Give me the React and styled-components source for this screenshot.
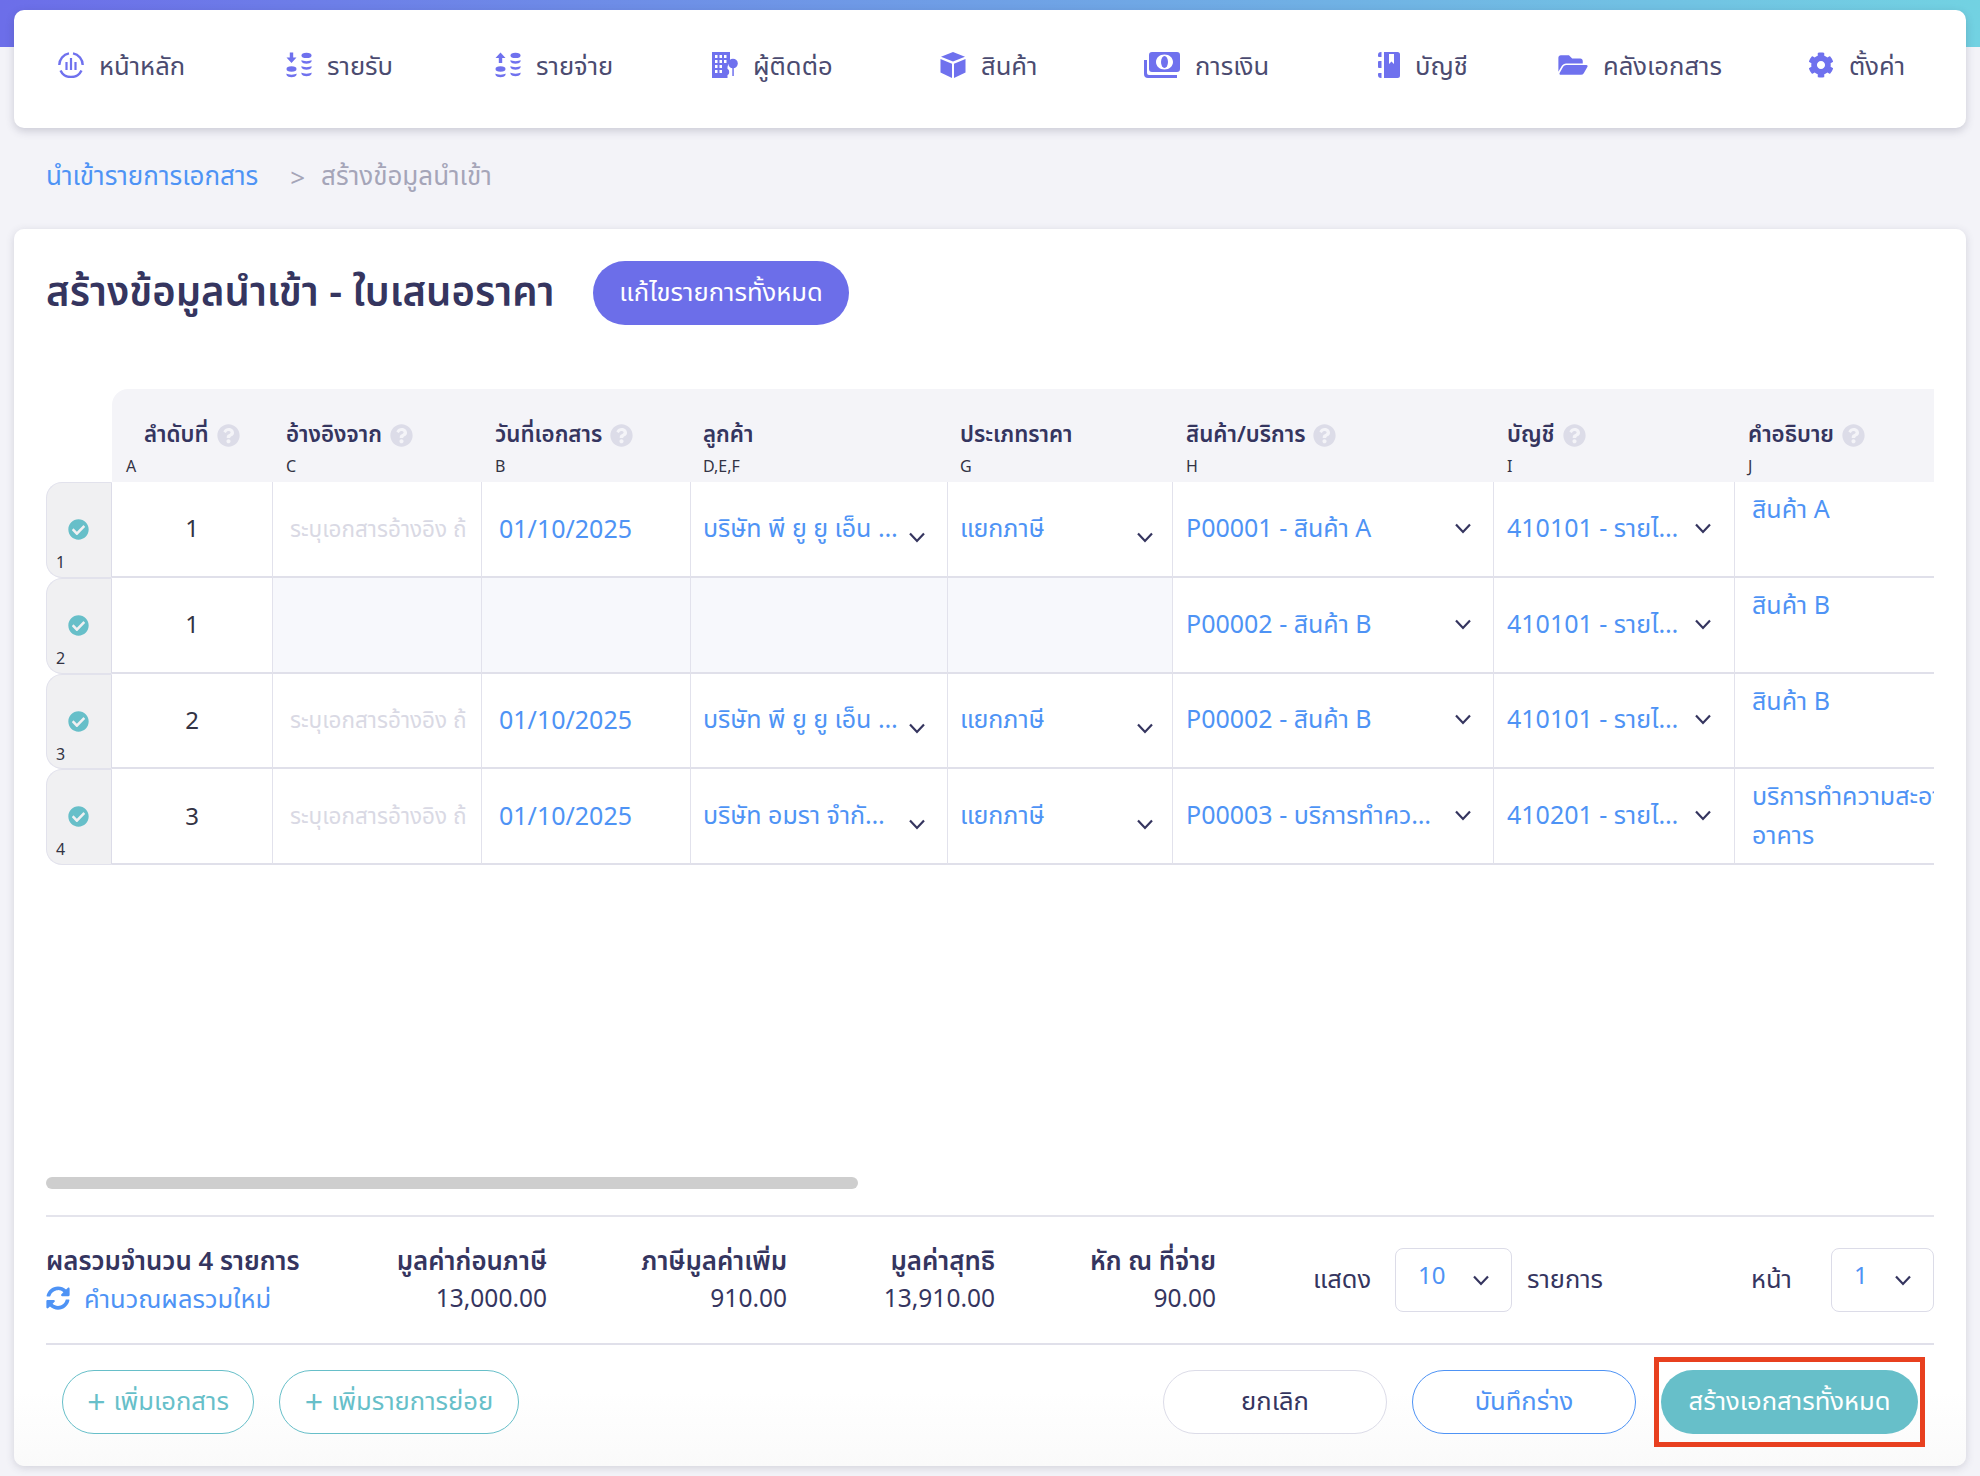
import React from "react";
import styled, { createGlobalStyle } from "styled-components";
import { FaFolderOpen, FaCog, FaSyncAlt, FaCheckCircle, FaQuestionCircle } from "react-icons/fa";

const Global = createGlobalStyle`
  html, body { margin: 0; padding: 0; }
  body {
    background: #f3f3f8 linear-gradient(90deg, #6c6ee9 0%, #72d2e2 100%) top left / 100% 47px no-repeat;
    font-family: "Noto Sans", "Noto Sans Thai", "Open Sans", sans-serif;
    color: #35355f;
  }
  * { box-sizing: border-box; }
`;

const Page = styled.div`
  width: 1980px;
  height: 1476px;
  padding: 10px 14px;
  overflow: hidden;
`;
const Nav = styled.nav`
  height: 118px;
  background: #fff;
  border-radius: 10px;
  box-shadow: 0 3px 8px rgba(60, 60, 90, 0.22);
  padding-left: 44px;
  display: grid;
  grid-template-columns: 228px 209px 217px 228px 204px 234px 180px 250px auto;
  align-items: center;
`;
const NavItem = styled.div`
  display: flex;
  align-items: center;
  gap: 15px;
  font-size: 25.6px;
  color: #4b4b70;
  height: 34px;
  margin-top: -8px;
  white-space: nowrap;
`;
const NavText = styled.span`
  margin-top: 5px;
`;
const IconBox = styled.span`
  display: inline-flex;
  width: ${(p) => p.$w || 26}px;
  height: 26px;
  color: #6f71ee;
  flex: none;
  svg { width: 100%; height: 100%; display: block; }
`;
const Crumbs = styled.div`
  height: 101px;
  padding: 0 0 4px 32px;
  display: flex;
  align-items: center;
  font-size: 26px;
  white-space: nowrap;
`;
const CrumbLink = styled.span` color: #4e93f5; `;
const CrumbSep = styled.span` color: #a5a5b8; margin: 0 16px 0 32px; `;
const CrumbNow = styled.span` color: #a5a5b8; `;
const Card = styled.section`
  height: 1237px;
  background: linear-gradient(180deg, #fff 94%, #fafafa 100%);
  border-radius: 10px;
  box-shadow: 0 2px 8px rgba(60, 60, 90, 0.18);
  padding: 32px 32px 0;
  display: flex;
  flex-direction: column;
`;
const TitleRow = styled.div`
  display: flex;
  align-items: center;
  height: 64px;
  margin-bottom: 64px;
`;
const Title = styled.h1`
  margin: 0;
  width: 547px;
  font-size: 40px;
  font-weight: 600;
  color: #35355f;
  white-space: nowrap;
`;
const Pill = styled.button`
  font-family: inherit;
  height: 64px;
  border-radius: 32px;
  cursor: pointer;
  font-size: 25.6px;
  white-space: nowrap;
  padding: 0;
  display: inline-flex;
  align-items: center;
  justify-content: center;
  flex: none;
  width: ${(p) => p.$w}px;
  ${(p) =>
    p.$kind === "primary" && "background:#6c6ee9;color:#fff;border:none;"}
  ${(p) =>
    p.$kind === "teal" && "background:#67bfc9;color:#fff;border:none;"}
  ${(p) =>
    p.$kind === "tealLine" && "background:#fff;color:#67bfc9;border:1px solid #67bfc9;"}
  ${(p) =>
    p.$kind === "blueLine" && "background:#fff;color:#4e93f5;border:1px solid #4e93f5;"}
  ${(p) =>
    p.$kind === "plain" && "background:#fff;color:#35355f;border:1px solid #dcdce8;"}
`;
const Plus = styled.span`
  font-size: 32px;
  line-height: 1;
  margin-right: 8px;
`;
const TableArea = styled.div`
  height: 788px;
  overflow: hidden;
`;
const cols = "66px 161px 209px 209px 257px 225px 321px 241px 320px";
const HeadRow = styled.div`
  display: grid;
  grid-template-columns: ${cols};
  height: 93px;
  width: 2008px;
`;
const HeadCell = styled.div`
  background: #f4f4f8;
  padding: 28px 0 0 ${(p) => p.$pad ?? 12}px;
  ${(p) => p.$first && "border-top-left-radius: 16px;"}
`;
const HeadLabel = styled.div`
  display: flex;
  align-items: center;
  gap: 8px;
  height: 36px;
  font-size: 22.3px;
  font-weight: 600;
  color: #35355f;
  white-space: nowrap;
  ${(p) => p.$shift && `margin-left: ${p.$shift}px;`}
`;
const HeadLetter = styled.div`
  font-size: 16px;
  line-height: 22px;
  margin-top: 2px;
  color: #333344;
`;
const Help = styled(FaQuestionCircle)`
  width: 23px;
  height: 23px;
  color: #dcdce8;
  flex: none;
`;
const Row = styled.div`
  display: grid;
  grid-template-columns: ${cols};
  height: 95.75px;
  width: 2008px;
`;
const Gutter = styled.div`
  background: #f0f0f2;
  border: 1px solid #e2e2ec;
  border-right: 1px solid #dcdce8;
  border-radius: 16px 0 0 16px;
  padding: 36px 0 0 9px;
  display: flex;
  flex-direction: column;
  font-size: 16px;
  line-height: 20px;
  color: #333344;
`;
const Check = styled(FaCheckCircle)`
  width: 21px;
  height: 21px;
  color: #67bfc9;
  margin-left: 12px;
  margin-bottom: 12px;
`;
const Cell = styled.div`
  border-right: 1px solid #e2e2ec;
  border-bottom: 2px solid #e0e0ea;
  background: ${(p) => (p.$muted ? "#f7f8fc" : "#fff")};
  min-width: 0;
  overflow: hidden;
  display: flex;
  align-items: center;
  font-size: 25px;
  white-space: nowrap;
  padding-left: ${(p) => p.$pad ?? 0}px;
`;
const NumCell = styled(Cell)`
  justify-content: center;
  font-size: 24px;
  color: #333344;
  padding-bottom: 2px;
`;
const Placeholder = styled.span`
  color: #d9d9e4;
  font-size: 22.5px;
  display: block;
  width: 176px;
  margin-top: 2px;
  overflow: hidden;
  white-space: nowrap;
`;
const Blue = styled.span`
  color: #4e93f5;
  display: block;
  overflow: hidden;
  text-overflow: ellipsis;
  white-space: nowrap;
  width: ${(p) => (p.$w ? p.$w + "px" : "auto")};
  flex: none;
`;
const DateText = styled(Blue)`
  margin-bottom: 2px;
`;
const Chevron = styled.svg`
  width: 18px;
  height: 12px;
  color: #35355f;
  flex: none;
  margin-left: ${(p) => p.$ml || 0}px;
  margin-top: ${(p) => p.$mt || 0}px;
`;
const DescCell = styled(Cell)`
  flex-direction: column;
  align-items: flex-start;
  justify-content: flex-start;
  padding: 7px 0 0 17px;
  line-height: 39px;
`;
const Chev = (p) => (
  <Chevron viewBox="0 0 18 12" fill="none" stroke="currentColor" strokeWidth="2.2" {...p}>
    <path d="M2 2.5 L9 10 L16 2.5" />
  </Chevron>
);
const Scroll = styled.div`
  width: 812px;
  height: 12px;
  background: #cecece;
  border-radius: 6px;
  flex: none;
`;
const Summary = styled.div`
  margin-top: 26px;
  height: 130px;
  border-top: 2px solid #e4e4ec;
  border-bottom: 2px solid #e0e0ea;
  display: flex;
  align-items: center;
`;
const SumCols = styled.div`
  display: grid;
  grid-template-columns: 250px 251px 240px 208px 221px;
  flex: none;
  margin-top: -3px;
`;
const SumLabel = styled.div`
  font-size: 25.8px;
  font-weight: 600;
  line-height: 38px;
  white-space: nowrap;
  text-align: ${(p) => (p.$left ? "left" : "right")};
`;
const SumValue = styled.div`
  font-size: 24.5px;
  line-height: 38px;
  text-align: right;
  white-space: nowrap;
`;
const Recalc = styled.div`
  display: flex;
  align-items: center;
  gap: 14px;
  font-size: 25.5px;
  line-height: 38px;
  color: #4e93f5;
  white-space: nowrap;
  svg { width: 24px; height: 24px; }
`;
const PageLabel = styled.div`
  font-size: 25.5px;
  flex: none;
  white-space: nowrap;
  width: ${(p) => p.$w}px;
  margin-left: ${(p) => p.$ml || 0}px;
`;
const PageSelect = styled.div`
  width: ${(p) => p.$w}px;
  height: 64px;
  border: 1px solid #dcdce8;
  border-radius: 8px;
  background: #fff;
  color: #4e93f5;
  font-size: 24px;
  flex: none;
  display: flex;
  align-items: flex-start;
  justify-content: space-between;
  padding: 9px 21px 0 ${(p) => p.$pad}px;
  svg { margin-top: 16px; }
`;
const Footer = styled.div`
  display: flex;
  gap: 25px;
  padding: 25px 16px 0;
`;
const Spacer = styled.div` flex: 1; `;
const Marked = styled.div`
  position: relative;
  display: flex;
`;
const Highlight = styled.div`
  position: absolute;
  left: -7px;
  right: -7px;
  top: -13px;
  bottom: -13px;
  border: 5px solid #e8401f;
  pointer-events: none;
`;

const Dash = () => (
  <svg viewBox="0 0 26 26" fill="none" stroke="currentColor" strokeWidth="2.4">
    <path d="M11 1.4A11.7 11.7 0 0 0 1.300 13" />
    <path d="M15 1.4A11.7 11.7 0 0 1 24.700 13" />
    <path d="M2.500 18.500A11.700 11.700 0 0 0 23.500 18.500" />
    <path d="M8.500 10v8M13 6v12M17.500 10v8" strokeWidth="2.200" />
  </svg>
);
const Coins = ({ up }) => (
  <svg viewBox="0 0 26 26" fill="currentColor">
    {up ? (
      <path d="M5.5 0.5 L10.5 6 H7.2 V11 H3.8 V6 H0.5 Z" />
    ) : (
      <path d="M3.8 0.5 H7.2 V5.5 H10.5 L5.5 11 L0.5 5.5 H3.8 Z" />
    )}
    <ellipse cx="5.5" cy="17" rx="5" ry="2.7" />
    <path d="M.5 21.5c1.5 1.5 8.5 1.5 10 0v1.4c-1.5 3-8.5 3-10 0z" />
    <ellipse cx="20.5" cy="3.4" rx="5" ry="2.7" />
    <path d="M15.5 8c1.5 1.5 8.5 1.5 10 0v1.4c-1.5 3-8.5 3-10 0z" />
    <path d="M15.5 14c1.5 1.5 8.5 1.5 10 0v1.4c-1.5 3-8.5 3-10 0z" />
    <path d="M15.5 20.5c1.5 1.5 8.5 1.5 10 0v1.4c-1.5 3-8.5 3-10 0z" />
  </svg>
);
const Building = () => (
  <svg viewBox="0 0 26 26" fill="currentColor">
    <path fillRule="evenodd" d="M0 0H18V10.5A5.5 5.5 0 0 0 15.5 15V26H0ZM3 3V6H5.500V3ZM7.500 3V6H10V3ZM12 3V6H14.500V3ZM3 8V11H5.500V8ZM7.500 8V11H10V8ZM12 8V11H14.500V8ZM3 13V16H5.500V13ZM7.500 13V16H10V13ZM3 18V21H5.500V18ZM7.500 18V21H10V18Z" />
    <circle cx="21" cy="11.500" r="4.800" />
    <rect x="20.300" y="15" width="1.500" height="9" />
    <circle cx="14" cy="20" r="3.200" />
    <rect x="13.200" y="22" width="1.600" height="4" />
  </svg>
);
const Cube = () => (
  <svg viewBox="0 0 26 26" fill="currentColor">
    <path d="M13 0 L25 4.8 L13 9.6 L1 4.8 Z" />
    <path d="M0.5 7 L12 11.7 V26 L0.5 20.6 Z" />
    <path d="M25.5 7 L14 11.7 V26 L25.5 20.6 Z" />
  </svg>
);
const Money = () => (
  <svg viewBox="0 0 36 26" fill="currentColor">
    <path fillRule="evenodd" d="M8 0H33a3 3 0 0 1 3 3V17a3 3 0 0 1-3 3H8a3 3 0 0 1-3-3V3a3 3 0 0 1 3-3ZM20.500 2.500C15.500 2.500 12 6 12 10s3.500 7.500 8.500 7.500 8.500-3.500 8.500-7.500-3.500-7.500-8.500-7.500Z" />
    <ellipse cx="20.500" cy="10" rx="3.500" ry="6" />
    <path d="M0 8H3V21a2 2 0 0 0 2 2H33V26H4a4 4 0 0 1-4-4Z" />
  </svg>
);
const Book = () => (
  <svg viewBox="0 0 22 26" fill="currentColor">
    <path fillRule="evenodd" d="M6 0H19.500A2.500 2.500 0 0 1 22 2.500V23.500A2.500 2.500 0 0 1 19.500 26H6ZM11 2V12L13.500 9.500L16 12V2Z" />
    <path d="M3.500 0V5H1a1 1 0 0 1-1-1V3A3 3 0 0 1 3 0ZM3.500 9V16H1a1 1 0 0 1-1-1V10a1 1 0 0 1 1-1ZM3.500 21V26H3a3 3 0 0 1-3-3V22a1 1 0 0 1 1-1Z" />
  </svg>
);

const navItems = [
  [<Dash />, "หน้าหลัก", 26],
  [<Coins />, "รายรับ", 26],
  [<Coins up />, "รายจ่าย", 26],
  [<Building />, "ผู้ติดต่อ", 26],
  [<Cube />, "สินค้า", 26],
  [<Money />, "การเงิน", 36],
  [<Book />, "บัญชี", 22],
  [<FaFolderOpen />, "คลังเอกสาร", 30],
  [<FaCog />, "ตั้งค่า", 26],
];

const rows = [
  { n: 1, idx: 1, cust: "บริษัท พี ยู ยู เอ็น จำกัด", prod: "P00001 - สินค้า A", acc: "410101 - รายได้จากการขาย", desc: ["สินค้า A"] },
  { n: 1, idx: 2, sub: true, prod: "P00002 - สินค้า B", acc: "410101 - รายได้จากการขาย", desc: ["สินค้า B"] },
  { n: 2, idx: 3, cust: "บริษัท พี ยู ยู เอ็น จำกัด", prod: "P00002 - สินค้า B", acc: "410101 - รายได้จากการขาย", desc: ["สินค้า B"] },
  { n: 3, idx: 4, cust: "บริษัท อมรา จำกัด มหาชน", prod: "P00003 - บริการทำความสะอาด", acc: "410201 - รายได้จากการบริการ", desc: ["บริการทำความสะอาด", "อาคาร"] },
];

const heads = [
  { label: "ลำดับที่", letter: "A", help: true, pad: 14, shift: 18, first: true },
  { label: "อ้างอิงจาก", letter: "C", help: true, pad: 13 },
  { label: "วันที่เอกสาร", letter: "B", help: true, pad: 13 },
  { label: "ลูกค้า", letter: "D,E,F", pad: 12 },
  { label: "ประเภทราคา", letter: "G", pad: 12 },
  { label: "สินค้า/บริการ", letter: "H", help: true, pad: 13 },
  { label: "บัญชี", letter: "I", help: true, pad: 13 },
  { label: "คำอธิบาย", letter: "J", help: true, pad: 13 },
];

export default function App() {
  return (
    <Page>
      <Global />
      <Nav>
        {navItems.map(([icon, label, w]) => (
          <NavItem key={label}>
            <IconBox $w={w}>{icon}</IconBox>
            <NavText>{label}</NavText>
          </NavItem>
        ))}
      </Nav>
      <Crumbs>
        <CrumbLink>นำเข้ารายการเอกสาร</CrumbLink>
        <CrumbSep>&gt;</CrumbSep>
        <CrumbNow>สร้างข้อมูลนำเข้า</CrumbNow>
      </Crumbs>
      <Card>
        <TitleRow>
          <Title>สร้างข้อมูลนำเข้า - ใบเสนอราคา</Title>
          <Pill $kind="primary" $w={256}>แก้ไขรายการทั้งหมด</Pill>
        </TitleRow>
        <TableArea>
          <HeadRow>
            <div />
            {heads.map((h) => (
              <HeadCell key={h.letter} $first={h.first} $pad={h.pad}>
                <HeadLabel $shift={h.shift}>
                  {h.label}
                  {h.help && <Help />}
                </HeadLabel>
                <HeadLetter>{h.letter}</HeadLetter>
              </HeadCell>
            ))}
          </HeadRow>
          {rows.map((r) => (
            <Row key={r.idx}>
              <Gutter>
                <Check />
                {r.idx}
              </Gutter>
              <NumCell>{r.n}</NumCell>
              {r.sub ? (
                <>
                  <Cell $muted />
                  <Cell $muted />
                  <Cell $muted />
                  <Cell $muted />
                </>
              ) : (
                <>
                  <Cell $pad={17}><Placeholder>ระบุเอกสารอ้างอิง ถ้ามี</Placeholder></Cell>
                  <Cell $pad={17}><DateText>01/10/2025</DateText></Cell>
                  <Cell $pad={12}>
                    <Blue $w={196}>{r.cust}</Blue>
                    <Chev $ml={9} $mt={16} />
                  </Cell>
                  <Cell $pad={12}>
                    <Blue $w={175}>แยกภาษี</Blue>
                    <Chev $ml={1} $mt={16} />
                  </Cell>
                </>
              )}
              <Cell $pad={13}>
                <Blue $w={254}>{r.prod}</Blue>
                <Chev $ml={14} $mt={-2} />
              </Cell>
              <Cell $pad={13}>
                <Blue $w={173}>{r.acc}</Blue>
                <Chev $ml={14} $mt={-2} />
              </Cell>
              <DescCell>
                {r.desc.map((d) => <Blue key={d}>{d}</Blue>)}
              </DescCell>
            </Row>
          ))}
        </TableArea>
        <Scroll />
        <Summary>
          <SumCols>
            <div>
              <SumLabel $left>ผลรวมจำนวน 4 รายการ</SumLabel>
              <Recalc><FaSyncAlt />คำนวณผลรวมใหม่</Recalc>
            </div>
            <div>
              <SumLabel>มูลค่าก่อนภาษี</SumLabel>
              <SumValue>13,000.00</SumValue>
            </div>
            <div>
              <SumLabel>ภาษีมูลค่าเพิ่ม</SumLabel>
              <SumValue>910.00</SumValue>
            </div>
            <div>
              <SumLabel>มูลค่าสุทธิ</SumLabel>
              <SumValue>13,910.00</SumValue>
            </div>
            <div>
              <SumLabel>หัก ณ ที่จ่าย</SumLabel>
              <SumValue>90.00</SumValue>
            </div>
          </SumCols>
          <PageLabel $w={82} $ml={97}>แสดง</PageLabel>
          <PageSelect $w={117} $pad={22}>10<Chev /></PageSelect>
          <PageLabel $w={224} $ml={15}>รายการ</PageLabel>
          <PageLabel $w={80}>หน้า</PageLabel>
          <PageSelect $w={103} $pad={22}>1<Chev /></PageSelect>
        </Summary>
        <Footer>
          <Pill $kind="tealLine" $w={192}><Plus>+</Plus>เพิ่มเอกสาร</Pill>
          <Pill $kind="tealLine" $w={240}><Plus>+</Plus>เพิ่มรายการย่อย</Pill>
          <Spacer />
          <Pill $kind="plain" $w={224}>ยกเลิก</Pill>
          <Pill $kind="blueLine" $w={224}>บันทึกร่าง</Pill>
          <Marked>
            <Pill $kind="teal" $w={257}>สร้างเอกสารทั้งหมด</Pill>
            <Highlight />
          </Marked>
        </Footer>
      </Card>
    </Page>
  );
}
